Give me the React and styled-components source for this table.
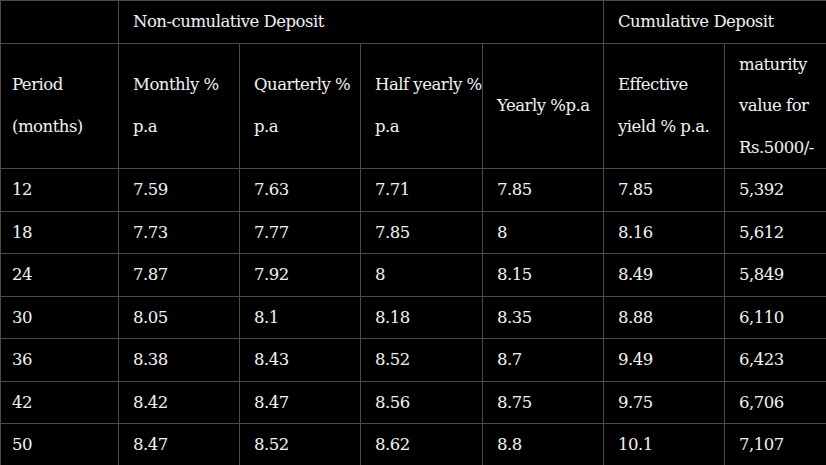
import React from 'react'
import styled, { createGlobalStyle } from 'styled-components'

const GlobalStyle = createGlobalStyle`
    html, body {
        margin: 0;
        padding: 0;
        background: #000;
        overflow: hidden;
    }
`

const Wrapper = styled.div`
    width: 826px;
    height: 465px;
    overflow: hidden;
    background: #000;
`

const Table = styled.table`
    width: 846px;
    table-layout: fixed;
    border-collapse: collapse;
    font-family: "DejaVu Serif", "Liberation Serif", serif;
    font-size: 16.5px;
    color: #f2f2f2;
    letter-spacing: -0.5px;
`

const Cell = styled.td`
    border: 1px solid #4a4a4a;
    padding: 0 3px 0 ${props => props.first ? '11px' : '14px'};
    line-height: 41.5px;
    vertical-align: middle;
    text-align: left;
    font-weight: normal;
    white-space: nowrap;
`

const HeadCell = styled(Cell).attrs({ as: 'th' })``

const cols = [118, 121, 121, 122, 121, 121, 122]

const rows = [
    ['12', '7.59', '7.63', '7.71', '7.85', '7.85', '5,392'],
    ['18', '7.73', '7.77', '7.85', '8', '8.16', '5,612'],
    ['24', '7.87', '7.92', '8', '8.15', '8.49', '5,849'],
    ['30', '8.05', '8.1', '8.18', '8.35', '8.88', '6,110'],
    ['36', '8.38', '8.43', '8.52', '8.7', '9.49', '6,423'],
    ['42', '8.42', '8.47', '8.56', '8.75', '9.75', '6,706'],
    ['50', '8.47', '8.52', '8.62', '8.8', '10.1', '7,107'],
]

const App = () => {
    return (
        <Wrapper>
            <GlobalStyle />
            <Table>
                <colgroup>
                    {cols.map((w, i) => <col key={i} style={{ width: w }} />)}
                </colgroup>
                <thead>
                    <tr>
                        <HeadCell first></HeadCell>
                        <HeadCell colSpan={4}>Non-cumulative Deposit</HeadCell>
                        <HeadCell colSpan={2}>Cumulative Deposit</HeadCell>
                    </tr>
                    <tr>
                        <HeadCell first>Period<br />(months)</HeadCell>
                        <HeadCell>Monthly %<br />p.a</HeadCell>
                        <HeadCell>Quarterly %<br />p.a</HeadCell>
                        <HeadCell>Half yearly %<br />p.a</HeadCell>
                        <HeadCell>Yearly %p.a</HeadCell>
                        <HeadCell>Effective<br />yield % p.a.</HeadCell>
                        <HeadCell>maturity<br />value for<br />Rs.5000/-</HeadCell>
                    </tr>
                </thead>
                <tbody>
                    {rows.map(r => (
                        <tr key={r[0]}>
                            {r.map((v, i) => <Cell key={i} first={i === 0}>{v}</Cell>)}
                        </tr>
                    ))}
                </tbody>
            </Table>
        </Wrapper>
    )
}

export default App
